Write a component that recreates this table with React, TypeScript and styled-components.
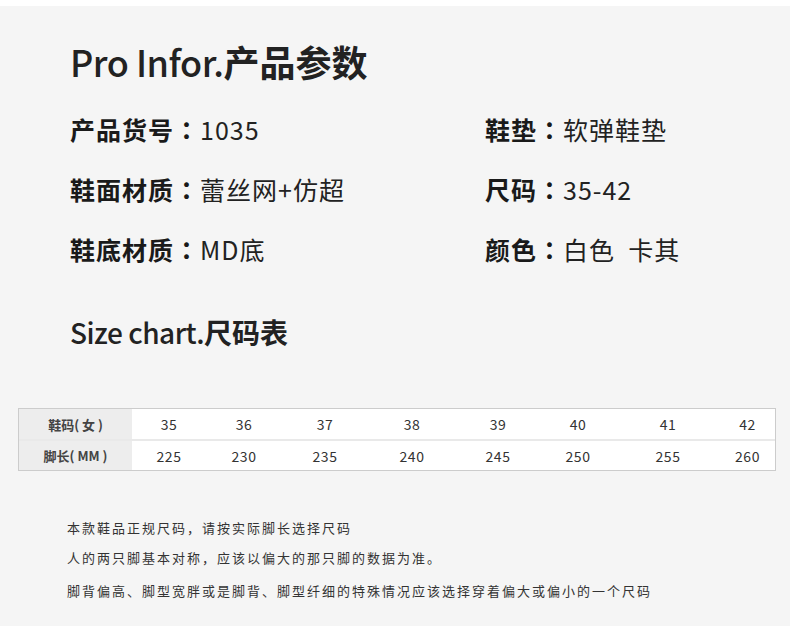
import React from 'react';
import styled, { createGlobalStyle } from 'styled-components';

const GlobalStyle = createGlobalStyle`
  html, body {
    margin: 0;
    padding: 0;
    background: #ffffff;
  }
  body {
    font-family: 'Noto Sans CJK SC', 'Noto Sans', sans-serif;
    color: #222222;
  }
`

const Page = styled.div`
  width: 790px;
  height: 620px;
  margin-top: 6px;
  background: #f5f5f5;
  padding-top: 33px;
  box-sizing: border-box;
  overflow: hidden;
`

const Heading = styled.h1<{ size: number }>`
  margin: 0;
  padding-left: 70px;
  font-size: ${p => p.size}px;
  line-height: 44px;
  font-weight: 500;
  color: #222222;
  letter-spacing: -0.5px;
`

const HeadingCn = styled.span`
  font-weight: 700;
  letter-spacing: 0;
`

const ParamGrid = styled.div`
  display: grid;
  grid-template-columns: 415px auto;
  row-gap: 20px;
  padding-left: 70px;
  margin-top: 26px;
  margin-bottom: 41px;
`

const ParamRow = styled.div`
  display: flex;
  align-items: center;
  height: 40px;
  font-size: 25px;
  letter-spacing: 1px;
  white-space: pre;
`

const ParamLabel = styled.span`
  font-weight: 700;
  color: #1a1a1a;
`

const Colon = styled.span`
  font-family: 'Noto Sans CJK TC', 'Noto Sans CJK SC', sans-serif;
  font-weight: 700;
`

const ParamValue = styled.span`
  font-weight: 400;
  color: #222222;
`

const SizeTable = styled.div`
  margin: 54px 0 0 18px;
  width: 756px;
  border: 1px solid #cccccc;
  background: #ffffff;
`

const TableRow = styled.div<{ last?: boolean }>`
  display: grid;
  grid-template-columns: 113px 74px 76px 86px 88px 84px 76px 104px 55px;
  height: ${p => (p.last ? 29 : 30)}px;
  border-bottom: ${p => (p.last ? 'none' : '2px solid #e9e9e9')};
`

const HeadCell = styled.div`
  display: flex;
  align-items: center;
  justify-content: center;
  background: #ededed;
  font-size: 13px;
  font-weight: 700;
  color: #444444;
  white-space: pre;
`

const Cell = styled.div`
  display: flex;
  align-items: center;
  justify-content: center;
  font-size: 14px;
  color: #333333;
  letter-spacing: 0.5px;
`

const Notes = styled.div`
  margin-top: 42px;
  padding-left: 67px;
`

const NoteLine = styled.p<{ gap?: number }>`
  margin: ${p => p.gap ?? 0}px 0 0;
  font-size: 13px;
  line-height: 30px;
  letter-spacing: 2px;
  color: #333333;
`

const params = [
  ['产品货号', '1035'],
  ['鞋垫', '软弹鞋垫'],
  ['鞋面材质', '蕾丝网+仿超'],
  ['尺码', '35-42'],
  ['鞋底材质', 'MD底'],
  ['颜色', '白色  卡其'],
];

const sizes = ['35', '36', '37', '38', '39', '40', '41', '42'];
const lengths = ['225', '230', '235', '240', '245', '250', '255', '260'];

const App = () => {
  return (
    <>
      <GlobalStyle />
      <Page>
        <Heading size={36}>
          Pro Infor.<HeadingCn>产品参数</HeadingCn>
        </Heading>
        <ParamGrid>
          {params.map(([label, value]) => (
            <ParamRow key={label}>
              <ParamLabel>{label}<Colon>：</Colon></ParamLabel>
              <ParamValue>{value}</ParamValue>
            </ParamRow>
          ))}
        </ParamGrid>
        <Heading size={28}>
          Size chart.<HeadingCn>尺码表</HeadingCn>
        </Heading>
        <SizeTable>
          <TableRow>
            <HeadCell>鞋码( 女 )</HeadCell>
            {sizes.map(s => <Cell key={s}>{s}</Cell>)}
          </TableRow>
          <TableRow last>
            <HeadCell>脚长( MM )</HeadCell>
            {lengths.map(l => <Cell key={l}>{l}</Cell>)}
          </TableRow>
        </SizeTable>
        <Notes>
          <NoteLine>本款鞋品正规尺码，请按实际脚长选择尺码</NoteLine>
          <NoteLine>人的两只脚基本对称，应该以偏大的那只脚的数据为准。</NoteLine>
          <NoteLine gap={3}>脚背偏高、脚型宽胖或是脚背、脚型纤细的特殊情况应该选择穿着偏大或偏小的一个尺码</NoteLine>
        </Notes>
      </Page>
    </>
  );
};

export default App;
